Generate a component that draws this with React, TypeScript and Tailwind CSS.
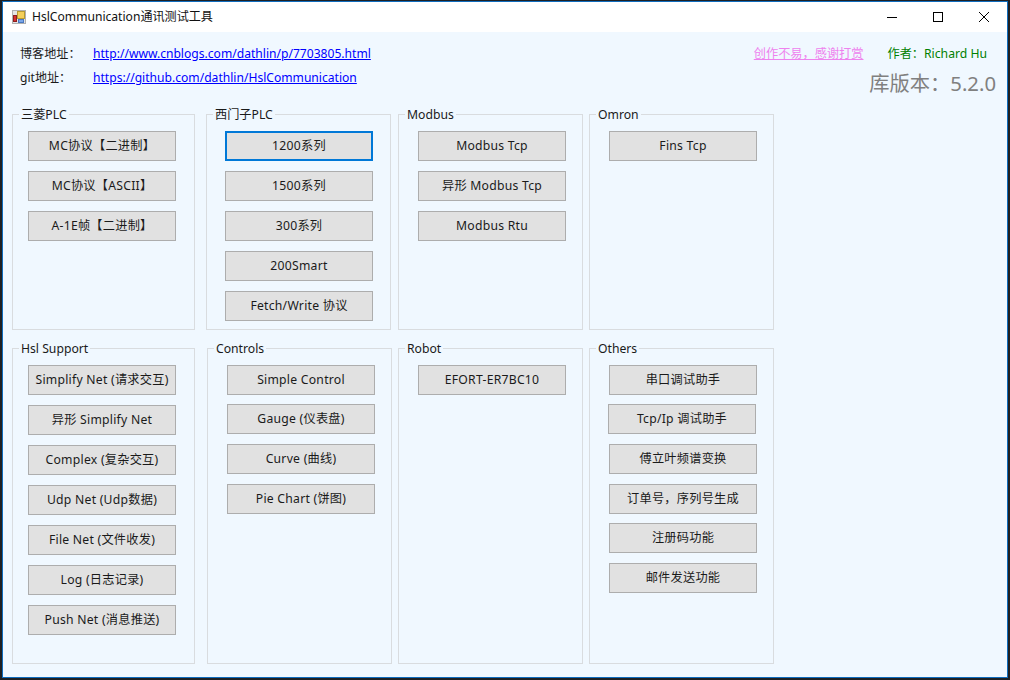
const FONT = "font-['Noto_Sans','Noto_Sans_CJK_SC',sans-serif]"

type Btn = { label: string; focus?: boolean; cls?: string }
type Group = { title: string; box: string; inner: string; buttons: Btn[] }

const TOP_GROUPS: Group[] = [
  {
    title: "三菱PLC",
    box: "w-[183px] ml-[9px]",
    inner: "pl-[15px]",
    buttons: [{ label: "MC协议【二进制】" }, { label: "MC协议【ASCII】" }, { label: "A-1E帧【二进制】" }],
  },
  {
    title: "西门子PLC",
    box: "w-[185px] ml-[11px]",
    inner: "pl-[18px]",
    buttons: [
      { label: "1200系列", focus: true },
      { label: "1500系列" },
      { label: "300系列" },
      { label: "200Smart" },
      { label: "Fetch/Write 协议" },
    ],
  },
  {
    title: "Modbus",
    box: "w-[185px] ml-[7px]",
    inner: "pl-[19px]",
    buttons: [{ label: "Modbus Tcp" }, { label: "异形 Modbus Tcp" }, { label: "Modbus Rtu" }],
  },
  {
    title: "Omron",
    box: "w-[185px] ml-[6px]",
    inner: "pl-[19px]",
    buttons: [{ label: "Fins Tcp" }],
  },
]

const BOTTOM_GROUPS: Group[] = [
  {
    title: "Hsl Support",
    box: "w-[183px] ml-[9px]",
    inner: "pl-[15px]",
    buttons: [
      { label: "Simplify Net (请求交互)" },
      { label: "异形 Simplify Net" },
      { label: "Complex (复杂交互)" },
      { label: "Udp Net (Udp数据)" },
      { label: "File Net (文件收发)" },
      { label: "Log (日志记录)" },
      { label: "Push Net (消息推送)" },
    ],
  },
  {
    title: "Controls",
    box: "w-[185px] ml-[12px]",
    inner: "pl-[19px]",
    buttons: [
      { label: "Simple Control" },
      { label: "Gauge (仪表盘)", cls: "-mt-px" },
      { label: "Curve (曲线)" },
      { label: "Pie Chart (饼图)" },
    ],
  },
  {
    title: "Robot",
    box: "w-[185px] ml-[6px]",
    inner: "pl-[19px]",
    buttons: [{ label: "EFORT-ER7BC10" }],
  },
  {
    title: "Others",
    box: "w-[185px] ml-[6px]",
    inner: "pl-[19px]",
    buttons: [
      { label: "串口调试助手" },
      { label: "Tcp/Ip 调试助手", cls: "-mt-px -ml-px" },
      { label: "傅立叶频谱变换" },
      { label: "订单号，序列号生成" },
      { label: "注册码功能", cls: "-mt-px" },
      { label: "邮件发送功能" },
    ],
  },
]

function AppIcon() {
  return (
    <svg width="14" height="14" viewBox="0 0 14 14" className="shrink-0">
      <rect x="0.5" y="0.5" width="13" height="13" fill="#e4e4e4" stroke="#b0b0b0" />
      <rect x="5.5" y="1.5" width="7" height="7" fill="#f4cf5a" stroke="#b89a30" />
      <rect x="1.5" y="5.5" width="3" height="6" fill="#d83030" stroke="#8c2020" />
      <rect x="6.5" y="9.5" width="5" height="3" fill="#7aa6e8" stroke="#4a78c0" />
    </svg>
  )
}

function WindowButtons() {
  return (
    <div className="ml-auto flex h-full">
      <div className="flex w-[46px] items-center justify-center">
        <svg width="12" height="12" viewBox="0 0 12 12">
          <path d="M1 6.5H11" stroke="#000" strokeWidth="1" />
        </svg>
      </div>
      <div className="flex w-[46px] items-center justify-center">
        <svg width="12" height="12" viewBox="0 0 12 12">
          <rect x="1.5" y="1.5" width="9" height="9" fill="none" stroke="#000" strokeWidth="1" />
        </svg>
      </div>
      <div className="flex w-[46px] items-center justify-center">
        <svg width="12" height="12" viewBox="0 0 12 12">
          <path d="M1 1L11 11M11 1L1 11" stroke="#000" strokeWidth="1" />
        </svg>
      </div>
    </div>
  )
}

function GroupBox({ group, height }: { group: Group; height: string }) {
  return (
    <div className={`relative border border-[#d9dcdf] ${group.box} ${height}`}>
      <span className="absolute left-[6px] -top-[8px] bg-[#f0f8ff] px-[2px] text-[12.2px] leading-[16px] text-[#1a1a1a]">
        {group.title}
      </span>
      <div className={`flex flex-col gap-[10px] pt-[16px] ${group.inner}`}>
        {group.buttons.map((btn) => (
          <button
            key={btn.label}
            className={`h-[30px] w-[148px] shrink-0 bg-[#e1e1e1] text-center text-[12.2px] leading-none tracking-[0.25px] text-[#1a1a1a] ${
              btn.focus ? "border-2 border-[#0078d7]" : "border border-[#adadad]"
            } ${btn.cls ?? ""}`}
          >
            {btn.label}
          </button>
        ))}
      </div>
    </div>
  )
}

export default function App() {
  return (
    <div className={`h-[680px] w-[1010px] overflow-hidden bg-[#1d2024] pb-[2px] pl-[2px] pr-[2px] pt-px ${FONT}`}>
      <div className="flex h-full w-full flex-col border border-[#0f6cbd] bg-[#f0f8ff]">
        {/* title bar */}
        <div className="flex h-[30px] shrink-0 items-center bg-white">
          <div className="ml-[9px] mr-[6px]">
            <AppIcon />
          </div>
          <span className="text-[12.1px] text-[#111]">HslCommunication通讯测试工具</span>
          <WindowButtons />
        </div>

        {/* links header */}
        <div className="flex h-[82px] shrink-0 justify-between text-[12.2px] leading-[16px]">
          <div className="flex flex-col gap-[8px] pl-[17px] pt-[14px] text-[12.1px]">
            <div className="flex">
              <span className="w-[73px] text-[#1a1a1a]">博客地址：</span>
              <a className="text-[#0000ff] underline">http://www.cnblogs.com/dathlin/p/7703805.html</a>
            </div>
            <div className="flex">
              <span className="w-[73px] text-[#1a1a1a]">git地址：</span>
              <a className="text-[#0000ff] underline">https://github.com/dathlin/HslCommunication</a>
            </div>
          </div>
          <div className="flex flex-col items-end pr-[11px] pt-[14px]">
            <div className="flex pr-[9px]">
              <a className="text-[#ee82ee] underline">创作不易，感谢打赏</a>
              <span className="ml-[24px] text-[#008000]">作者：Richard Hu</span>
            </div>
            <div className="mt-[7px] text-[20.3px] leading-[28px] text-[#808080]">库版本：5.2.0</div>
          </div>
        </div>

        {/* device groups */}
        <div className="flex h-[216px] shrink-0">
          {TOP_GROUPS.map((g) => (
            <GroupBox key={g.title} group={g} height="h-[216px]" />
          ))}
        </div>
        <div className="mt-[18px] flex h-[316px] shrink-0">
          {BOTTOM_GROUPS.map((g) => (
            <GroupBox key={g.title} group={g} height="h-[316px]" />
          ))}
        </div>
      </div>
    </div>
  )
}
